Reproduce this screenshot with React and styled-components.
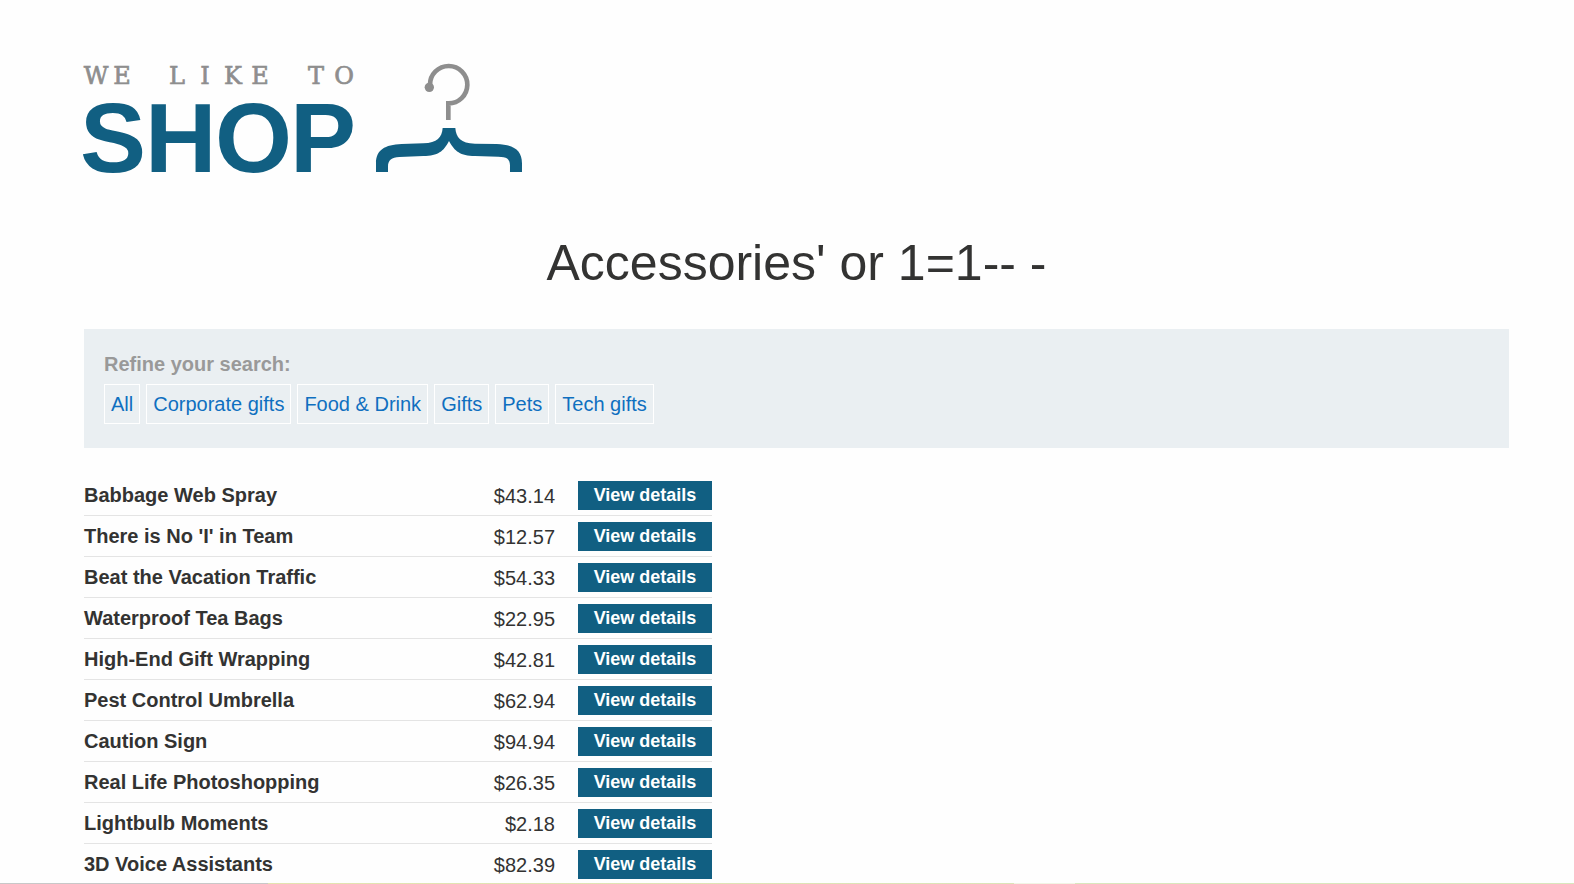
import React from "react";
import styled, { createGlobalStyle } from "styled-components";

const GlobalStyle = createGlobalStyle`
  * { box-sizing: border-box; }
  body {
    margin: 0;
    background: #fefefe;
    color: #333332;
    font-family: Arial, "Liberation Sans", sans-serif;
    font-size: 20px;
    line-height: 24px;
  }
`;

const Page = styled.main`
  padding: 60px 65px 0 84px;
`;

const LogoImage = styled.svg`
  display: block;
  width: 440px;
  height: 120px;
  overflow: visible;
`;

const Title = styled.h1`
  margin: 53px 0 36px;
  font-size: 50px;
  font-weight: 400;
  line-height: 60px;
  text-align: center;
`;

const SearchPanel = styled.section`
  padding: 23px 20px 24px;
  background: #eaeff2;
`;

const PanelLabel = styled.h2`
  margin: 0 0 8px;
  color: #999;
  font-size: 20px;
  line-height: 24px;
`;

const FilterList = styled.nav`
  display: flex;
  flex-wrap: wrap;
  gap: 6px;
`;

const FilterLink = styled.a`
  padding: 7px 6px;
  border: 1px solid #fff;
  color: #0f6fc0;
  line-height: 24px;
  text-decoration: none;
`;

const ProductTable = styled.table`
  width: 44%;
  min-width: 628px;
  margin-top: 27px;
  border-collapse: separate;
  border-spacing: 0;
`;

const ProductRow = styled.tr`
  height: 41px;

  & > * {
    border-bottom: 1px solid #e4e4e4;
  }

  &:last-child {
    height: 40px;
  }

  &:last-child > * {
    border-bottom: 0;
  }
`;

const NameCell = styled.th`
  padding: 0;
  text-align: left;
`;

const PriceCell = styled.td`
  padding: 1px 23px 0 0;
  text-align: right;
`;

const ActionCell = styled.td`
  width: 134px;
  padding: 1px 0 0;
`;

const DetailsLink = styled.a`
  display: block;
  padding: 2px 0 3px;
  background: #115f82;
  color: #fff;
  font-size: 18px;
  font-weight: 700;
  line-height: 24px;
  text-align: center;
  text-decoration: none;
`;

const BottomEdge = styled.div`
  position: fixed;
  inset: auto 0 0 0;
  height: 1px;
  background: linear-gradient(
    90deg,
    #c8c8c8 17%,
    #e3e3b0 17%,
    #dbe4b8 64.4%,
    #f1f4e4 64.4%,
    #f1f4e4 68.3%,
    #d9e7bd 68.3%
  );
`;

const filters = ["All", "Corporate gifts", "Food & Drink", "Gifts", "Pets", "Tech gifts"];

const products = [
  ["Babbage Web Spray", "$43.14"],
  ["There is No 'I' in Team", "$12.57"],
  ["Beat the Vacation Traffic", "$54.33"],
  ["Waterproof Tea Bags", "$22.95"],
  ["High-End Gift Wrapping", "$42.81"],
  ["Pest Control Umbrella", "$62.94"],
  ["Caution Sign", "$94.94"],
  ["Real Life Photoshopping", "$26.35"],
  ["Lightbulb Moments", "$2.18"],
  ["3D Voice Assistants", "$82.39"],
];

function Logo() {
  return (
    <LogoImage viewBox="0 0 440 120" role="img" aria-label="We like to shop">
      <text
        x="12 38 66 93 121 149 176 204 232 260"
        y="24"
        textAnchor="middle"
        fill="#8e8e8e"
        stroke="#8e8e8e"
        strokeWidth="0.7"
        fontFamily="'DejaVu Serif', serif"
        fontSize="24"
      >
        WE LIKE TO
      </text>
      <text x="-4 61 131 206" y="112" fill="#115f82" fontFamily="'Liberation Sans', Arial, sans-serif" fontSize="99" fontWeight="700">
        SHOP
      </text>
      {/* hanger: hook on top, curly-brace shoulders below */}
      <g transform="translate(276 -10) scale(0.3333)">
        <path d="M210 104 A56 56 0 1 1 265 160 V210" fill="none" stroke="#8e8e8e" strokeWidth="14" />
        <circle cx="208" cy="112" r="14" fill="#8e8e8e" />
        <path
          fill="#115f82"
          d="M248 234 H286 C288 262 302 280 345 281 L410 282 C460 284 486 300 486 340 V366 H450 V346 C449 325 440 321 415 320 L345 318 C300 317 285 305 267 273 C250 305 235 317 190 318 L118 321 C95 322 84 330 84 350 V366 H48 V340 C48 300 74 284 125 282 L190 280 C232 279 246 262 248 234 Z"
        />
      </g>
    </LogoImage>
  );
}

export default function App() {
  return (
    <>
      <GlobalStyle />
      <Page>
        <Logo />
        <Title>Accessories' or 1=1-- -</Title>
        <SearchPanel>
          <PanelLabel>Refine your search:</PanelLabel>
          <FilterList>
            {filters.map((name) => (
              <FilterLink href="#" key={name}>{name}</FilterLink>
            ))}
          </FilterList>
        </SearchPanel>
        <ProductTable>
          <tbody>
            {products.map(([name, price]) => (
              <ProductRow key={name}>
                <NameCell scope="row">{name}</NameCell>
                <PriceCell>{price}</PriceCell>
                <ActionCell>
                  <DetailsLink href="#">View details</DetailsLink>
                </ActionCell>
              </ProductRow>
            ))}
          </tbody>
        </ProductTable>
      </Page>
      <BottomEdge />
    </>
  );
}
